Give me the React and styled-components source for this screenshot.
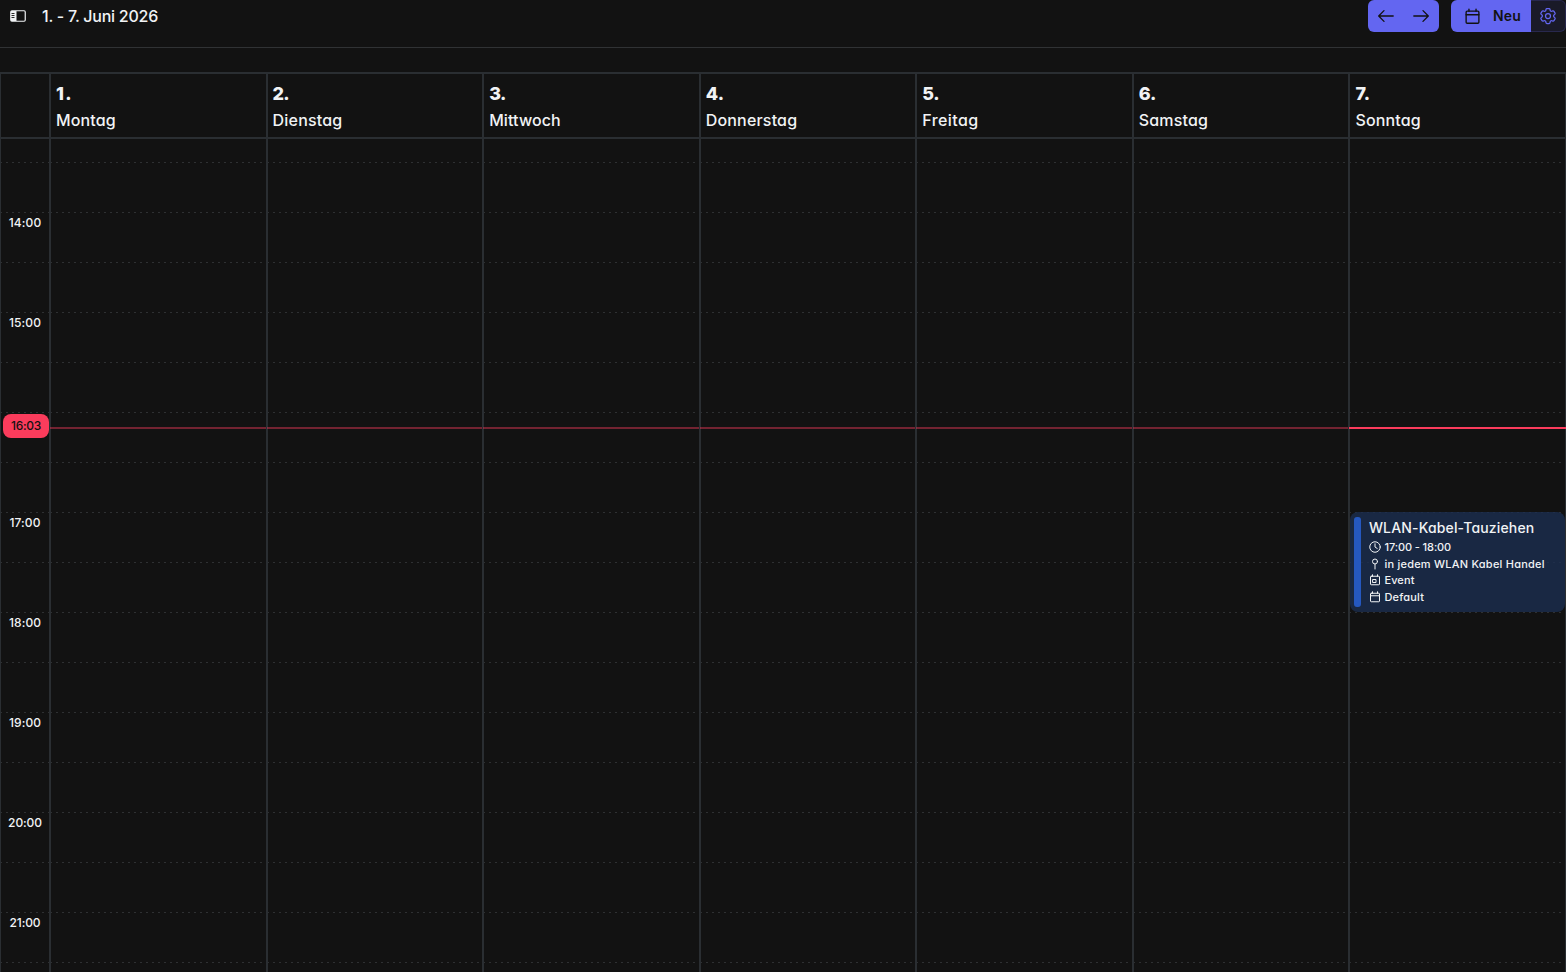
import React from "react";
import styled, { createGlobalStyle } from "styled-components";
import { HiOutlineCog6Tooth } from "react-icons/hi2";

const line = "#2a2e32";

const GlobalStyle = createGlobalStyle`
  *, *::before, *::after { box-sizing: border-box; }
  html, body { margin: 0; background: #121212; overflow: hidden; }
  body {
    color: #f1f3f5;
    font-family: Inter, "Open Sans", sans-serif;
    font-feature-settings: "cv11";
  }
`;

const Page = styled.div`
  display: flex;
  flex-direction: column;
  width: 100%;
  height: 972px;
  overflow: hidden;
`;

const Toolbar = styled.header`
  display: flex;
  align-items: flex-start;
  flex: none;
  height: 48px;
  padding-left: 10px;
  border-bottom: 1px solid #303234;
`;

const Brand = styled.div`
  display: flex;
  align-items: center;
  gap: 16px;
  height: 32px;
  flex: 1;
  svg { display: block; }
`;

const Label = styled.span`
  display: block;
  white-space: nowrap;
  font-size: ${(p) => p.$size}px;
  font-weight: ${(p) => p.$weight || 450};
  line-height: ${(p) => p.$line || 20}px;
  letter-spacing: ${(p) => p.$spacing || 0}px;
`;

const NavGroup = styled.div`
  display: flex;
  width: 71px;
  height: 32px;
  margin-right: 12px;
  border-radius: 6px;
  background: #6366f1;
  color: #121212;
`;

const NavButton = styled.button`
  display: flex;
  align-items: center;
  justify-content: center;
  flex: 1;
  padding: 0;
  border: 0;
  background: none;
  color: inherit;
`;

const NewButton = styled.button`
  display: flex;
  align-items: center;
  gap: 12px;
  width: 80px;
  height: 32px;
  padding: 0 0 0 13px;
  border: 0;
  border-radius: 6px 0 0 6px;
  background: #6366f1;
  color: #121212;
  font-family: inherit;
  font-feature-settings: inherit;
`;

const SettingsButton = styled.button`
  display: flex;
  align-items: center;
  justify-content: center;
  width: 35px;
  height: 32px;
  padding: 0;
  border: 1px solid #28284d;
  border-left: 0;
  border-radius: 0 6px 6px 0;
  background: #1a1a28;
  color: #6366f1;
`;

const Calendar = styled.main`
  display: flex;
  flex-direction: column;
  flex: 1;
  margin-top: 24px;
  border: solid ${line};
  border-width: 2px 1px 0;
`;

const Week = styled.div`
  display: grid;
  grid-template-columns: 48px repeat(7, 1fr);
`;

const HeadRow = styled(Week)`
  flex: none;
  height: 65px;
  border-bottom: 2px solid ${line};
`;

const DayHead = styled.div`
  padding: 6px 0 0 5px;
  border-left: 2px solid ${line};
`;

const Body = styled(Week)`
  height: 833px;
`;

const Gutter = styled.div`
  position: relative;
`;

const DayColumn = styled.div`
  position: relative;
  border-left: 2px solid ${line};
`;

const Slot = styled.div`
  height: ${(p) => (p.$first ? 24 : 50)}px;
  background: repeating-linear-gradient(90deg, #2e3032 0 1px, transparent 1px 5px, #2e3032 5px 6px) 0 100% / 100% 1px no-repeat;
`;

const Hour = styled(Label)`
  width: 48px;
  text-align: center;
`;

const NowLine = styled.div`
  position: absolute;
  top: 288px;
  left: -1px;
  right: -1px;
  height: 2px;
  background: #fb3c5c;
  opacity: ${(p) => (p.$today ? 1 : 0.42)};
`;

const NowBadge = styled.div`
  position: absolute;
  top: 275px;
  left: 2px;
  display: flex;
  align-items: center;
  justify-content: center;
  width: 46px;
  height: 24px;
  border-radius: 8px;
  background: #fb3c5c;
  color: #121212;
`;

const EventCard = styled.article`
  position: absolute;
  top: 373px;
  left: 0;
  right: 0;
  display: flex;
  gap: 7.5px;
  height: 100px;
  padding: 5px 0 5px 4px;
  border-radius: 8px;
  background: rgba(28, 46, 80, 0.8);
`;

const EventBar = styled.div`
  width: 7px;
  border-radius: 3px;
  background: #2558c0;
`;

const EventText = styled.div`
  display: flex;
  flex-direction: column;
`;

const Detail = styled.div`
  display: flex;
  align-items: center;
  gap: 3.5px;
  height: 16.7px;
  svg { flex: none; }
`;

const Details = styled.div`
  padding-top: 0.7px;
`;

const Svg = ({ size, width = 1.5, children }) => (
  <svg width={size} height={size} viewBox="0 0 24 24" fill="none" stroke="currentColor"
    strokeWidth={width} strokeLinecap="round" strokeLinejoin="round">{children}</svg>
);

const SidebarIcon = () => (
  <svg width="16" height="12" viewBox="0 0 16 12" fill="none">
    <rect x=".75" y=".75" width="14.5" height="10.5" rx="1.2" stroke="currentColor" strokeWidth="1.2" />
    <path d="M1 1h5.5v10H1z" fill="currentColor" />
    <path d="M1.5 3.5h3M1.5 5.5h3M1.5 7.5h3" stroke="#121212" strokeWidth=".9" />
  </svg>
);

const ArrowLeft = () => (
  <svg width="16" height="14" viewBox="0 0 16 14" fill="none" stroke="currentColor" strokeWidth="1.3" strokeLinecap="round" strokeLinejoin="round"><path d="M15.2 7H.8M6 1.6.7 7 6 12.4" /></svg>
);
const ArrowRight = () => (
  <svg width="16" height="14" viewBox="0 0 16 14" fill="none" stroke="currentColor" strokeWidth="1.3" strokeLinecap="round" strokeLinejoin="round"><path d="M.8 7h14.4M10 1.6 15.3 7 10 12.4" /></svg>
);

const CalendarIcon = ({ size, width, event }) => (
  <Svg size={size} width={width}>
    <rect x="3" y="4.5" width="18" height="17" rx="1.5" />
    {event ? <rect x="8" y="11" width="6" height="6" /> : <path d="M3 9.5h18" />}
    <path d="M7 1.5v3M17 1.5v3" />
  </Svg>
);
const ClockIcon = () => <Svg size={12} width={2}><circle cx="12" cy="12" r="10.5" /><path d="M12 5.5V12l4.5 3" /></Svg>;
const PinIcon = () => <Svg size={12} width={2}><circle cx="12" cy="7" r="5" /><path d="M12 12.5V22" /></Svg>;

const days = [
  { name: "Montag", spacing: 0.12, numberSpacing: 1.2 },
  { name: "Dienstag", spacing: 0.2, numberSpacing: -0.9 },
  { name: "Mittwoch", spacing: 0.1, numberSpacing: -0.6 },
  { name: "Donnerstag", spacing: 0.18, numberSpacing: 0.2 },
  { name: "Freitag", spacing: 0.42, numberSpacing: -0.3 },
  { name: "Samstag", spacing: 0.15, numberSpacing: -0.3 },
  { name: "Sonntag", spacing: 0.17, numberSpacing: 0 },
];
const slots = ["", "", "14:00", "", "15:00", "", "", "", "17:00", "", "18:00", "", "19:00", "", "20:00", "", "21:00", ""];

const details = [
  { icon: <ClockIcon />, text: "17:00 - 18:00", spacing: -0.1 },
  { icon: <PinIcon />, text: "in jedem WLAN Kabel Handel", spacing: 0.23 },
  { icon: <CalendarIcon size={12} width={2} event />, text: "Event", spacing: 0.1 },
  { icon: <CalendarIcon size={12} width={2} />, text: "Default", spacing: 0.18 },
];

export default function App() {
  return (
    <Page>
      <GlobalStyle />
      <Toolbar>
        <Brand>
          <SidebarIcon />
          <Label $size={16} $spacing={-0.25}>1. - 7. Juni 2026</Label>
        </Brand>
        <NavGroup>
          <NavButton aria-label="Zurück"><ArrowLeft /></NavButton>
          <NavButton aria-label="Weiter"><ArrowRight /></NavButton>
        </NavGroup>
        <NewButton>
          <CalendarIcon size={17} width={1.9} />
          <Label $size={14} $weight={600} $spacing={0.15}>Neu</Label>
        </NewButton>
        <SettingsButton aria-label="Einstellungen"><HiOutlineCog6Tooth size={20} /></SettingsButton>
      </Toolbar>
      <Calendar>
        <HeadRow>
          <div />
          {days.map(({ name, spacing, numberSpacing }, i) => (
            <DayHead key={name}>
              <Label $size={18} $weight={800} $line={27} $spacing={numberSpacing}>{i + 1}.</Label>
              <Label $size={16} $line={27} $spacing={spacing}>{name}</Label>
            </DayHead>
          ))}
        </HeadRow>
        <Body>
          <Gutter>
            {slots.map((hour, i) => (
              <Slot key={i} $first={i === 0}>
                {hour && <Hour $size={12} $weight={500} $spacing={hour.startsWith("2") ? -0.1 : 0.1}>{hour}</Hour>}
              </Slot>
            ))}
            <NowBadge><Label $size={12} $weight={500} $spacing={-0.3}>16:03</Label></NowBadge>
          </Gutter>
          {days.map(({ name }, d) => (
            <DayColumn key={name}>
              {slots.map((_, i) => <Slot key={i} $first={i === 0} />)}
              <NowLine $today={d === 6} />
              {d === 6 && (
                <EventCard>
                  <EventBar />
                  <EventText>
                    <Label $size={14} $line={21} $spacing={0.16}>WLAN-Kabel-Tauziehen</Label>
                    <Details>
                      {details.map(({ icon, text, spacing }) => (
                        <Detail key={text}>
                          {icon}
                          <Label $size={11} $weight={500} $line={16} $spacing={spacing}>{text}</Label>
                        </Detail>
                      ))}
                    </Details>
                  </EventText>
                </EventCard>
              )}
            </DayColumn>
          ))}
        </Body>
      </Calendar>
    </Page>
  );
}
